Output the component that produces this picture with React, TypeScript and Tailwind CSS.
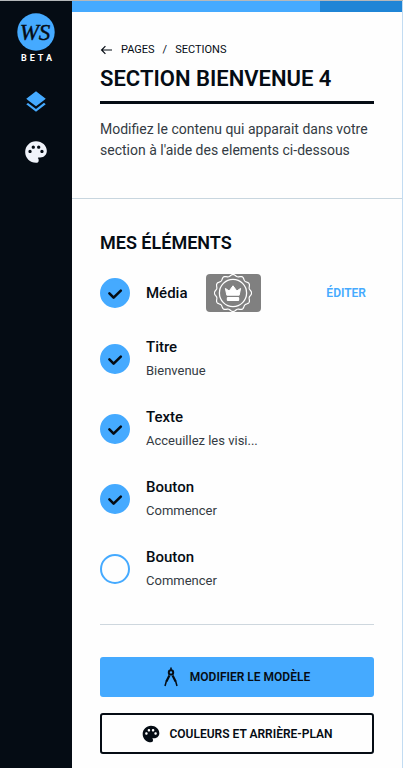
import { MdLayers, MdPalette } from "react-icons/md";

type Element = {
  id: string;
  title: string;
  detail: string;
  enabled: boolean;
};

const elements: Element[] = [
  { id: "titre", title: "Titre", detail: "Bienvenue", enabled: true },
  { id: "texte", title: "Texte", detail: "Acceuillez les visi...", enabled: true },
  { id: "bouton-1", title: "Bouton", detail: "Commencer", enabled: true },
  { id: "bouton-2", title: "Bouton", detail: "Commencer", enabled: false },
];

function Toggle({ id, checked }: { id: string; checked: boolean }) {
  return (
    <span className="relative block size-[30px] shrink-0">
      <input
        id={id}
        type="checkbox"
        defaultChecked={checked}
        className="peer block size-full cursor-pointer appearance-none rounded-full border-2 border-[#45aaff] checked:bg-[#45aaff]"
      />
      <svg
        viewBox="0 0 30 30"
        className="pointer-events-none absolute inset-0 hidden peer-checked:block"
        fill="none"
        stroke="#050c14"
        strokeWidth="2.6"
        strokeLinecap="round"
        strokeLinejoin="round"
        aria-hidden="true"
      >
        <path d="M9.4 15.4l4.2 4.2 7.2-7" />
      </svg>
    </span>
  );
}

function Compass() {
  return (
    <svg viewBox="0 0 14 20" className="h-5 w-3.5" fill="none" stroke="#050c14" aria-hidden="true">
      <path d="M7 .4v3" strokeWidth="1.6" />
      <circle cx="7" cy="5.4" r="2.2" strokeWidth="2" />
      <path d="M5.4 8.4L2.4 14.6M8.6 8.4l3 6.2" strokeWidth="2.2" />
      <path d="M2.4 14L1 19M11.6 14l1.4 5" strokeWidth="1.5" />
    </svg>
  );
}

function sealOutline() {
  const points: string[] = [];
  for (let i = 0; i <= 144; i++) {
    const angle = (i / 144) * Math.PI * 2 - Math.PI / 2;
    const radius = 17.7 + 0.9 * Math.cos(12 * angle);
    points.push(`${(19 + radius * Math.cos(angle)).toFixed(2)},${(19 + radius * Math.sin(angle)).toFixed(2)}`);
  }
  return points.join(" ");
}

function CrownSeal() {
  return (
    <svg viewBox="0 0 38 38" className="size-[38px]" fill="none" stroke="white" aria-hidden="true">
      <polygon points={sealOutline()} strokeWidth="1.2" />
      <circle cx="19" cy="19" r="13.6" strokeWidth="1.3" />
      <path
        d="M12.8 21.2l-1.4-6.8 3.8 2.6 3.8-5.2 3.8 5.2 3.8-2.6-1.4 6.8z"
        fill="white"
        stroke="white"
        strokeWidth="1"
        strokeLinejoin="round"
      />
      <rect x="12.8" y="23" width="12.4" height="4" rx="1" fill="white" stroke="none" />
    </svg>
  );
}

export default function App() {
  return (
    <div className="flex min-h-screen border-t border-[#b5b8ba] bg-[#fefefe] font-['Roboto',sans-serif] text-[#050c14]">
      <aside className="flex w-[72px] shrink-0 flex-col items-center bg-[#050c14] pt-3">
        <a href="#accueil" className="flex flex-col items-center">
          <svg viewBox="0 0 38 38" className="size-[38px]" role="img" aria-label="WS">
            <circle cx="19" cy="19" r="18.7" fill="#45aaff" />
            <text
              x="18"
              y="27"
              textAnchor="middle"
              fill="#050c14"
              stroke="#050c14"
              strokeWidth="0.4"
              className="font-['Liberation_Serif',serif] text-[23px] italic"
            >
              WS
            </text>
          </svg>
          <span className="pl-1 text-[9px] leading-[14px] font-bold tracking-[3px] text-white">BETA</span>
        </a>
        <nav className="mt-6 flex flex-col items-center gap-6">
          <a href="#sections" aria-label="Sections" className="text-[#45aaff]">
            <MdLayers className="size-[26px]" />
          </a>
          <a href="#couleurs" aria-label="Couleurs" className="text-[#f0f3fa]">
            <MdPalette className="size-[26px]" />
          </a>
        </nav>
      </aside>

      <main className="flex min-w-0 flex-1 flex-col border-r border-[#c2dcf2]">
        <div
          role="progressbar"
          aria-label="Progression"
          aria-valuenow={75}
          aria-valuemin={0}
          aria-valuemax={100}
          className="h-[11px] bg-[#1f85d6]"
        >
          <div className="h-full w-3/4 bg-[#45aaff]" />
        </div>

        <header className="border-b border-[#c8d6df] px-7 pt-7 pb-[37px]">
          <nav className="flex items-center text-[11px] leading-5">
            <a href="#retour" aria-label="Retour" className="mr-2">
              <svg viewBox="0 0 13 12" className="h-3 w-[13px]" fill="none" stroke="#050c14" strokeWidth="1.2" aria-hidden="true">
                <path d="M12 6H1.6M5.4 2.2L1.6 6l3.8 3.8" />
              </svg>
            </a>
            <a href="#pages">PAGES</a>
            <span className="mx-2">/</span>
            <a href="#sections">SECTIONS</a>
          </nav>
          <h1 className="mt-[5px] border-b-3 border-[#050c14] pb-2 text-[22px] leading-7 font-semibold">
            SECTION BIENVENUE 4
          </h1>
          <p className="mt-[15px] text-sm leading-[21px] text-[#343b43]">
            Modifiez le contenu qui apparait dans votre section à l'aide des elements ci-dessous
          </p>
        </header>

        <section className="px-7 pt-8 pb-3.5">
          <h2 className="text-lg leading-6 font-semibold">MES ÉLÉMENTS</h2>

          <div className="mt-[19px] mb-3 flex items-center">
            <Toggle id="media" checked />
            <label htmlFor="media" className="ml-4 text-[15px] leading-6 font-medium">
              Média
            </label>
            <span className="ml-[18px] flex h-[38px] w-[55px] items-center justify-center rounded bg-[#808080]">
              <CrownSeal />
            </span>
            <button type="button" className="mr-2 ml-auto text-xs font-semibold text-[#45aaff]">
              ÉDITER
            </button>
          </div>

          <ul>
            {elements.map((element) => (
              <li key={element.id} className="flex h-[70px] items-center gap-4">
                <Toggle id={element.id} checked={element.enabled} />
                <label htmlFor={element.id} className="flex flex-col">
                  <span className="text-[15px] leading-6 font-medium">{element.title}</span>
                  <span className="text-[13px] leading-6 text-[#343b43]">{element.detail}</span>
                </label>
              </li>
            ))}
          </ul>

          <div className="mt-5 flex flex-col gap-4 border-t border-[#ced7de] pt-8">
            <button
              type="button"
              className="flex h-10 items-center justify-center gap-3 rounded-[3px] bg-[#45aaff] text-xs font-semibold"
            >
              <Compass />
              MODIFIER LE MODÈLE
            </button>
            <button
              type="button"
              className="flex h-[41px] items-center justify-center gap-2 rounded-[3px] border-2 border-[#050c14] text-xs font-semibold"
            >
              <MdPalette className="size-5" />
              COULEURS ET ARRIÈRE-PLAN
            </button>
          </div>
        </section>
      </main>
    </div>
  );
}
